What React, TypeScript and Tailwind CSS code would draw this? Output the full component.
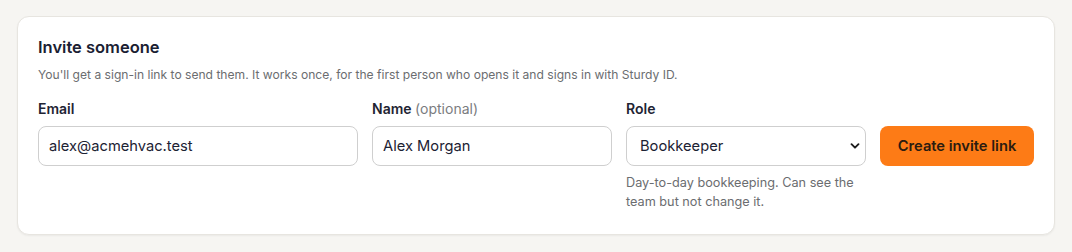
import React, { useState } from 'react'

const roles: Record<string, string> = {
  Bookkeeper: 'Day-to-day bookkeeping. Can see the team but not change it.',
  Admin: 'Full access. Can manage the team and billing.',
  Member: 'Can work in the books but not manage the team.',
}

export default function App() {
  const [email, setEmail] = useState('alex@acmehvac.test')
  const [name, setName] = useState('Alex Morgan')
  const [role, setRole] = useState('Bookkeeper')

  return (
    <div
      className="min-h-[252px] bg-[#f6f5f2] px-[17px] pt-4 pb-4 text-[#1c2233]"
      style={{ fontFamily: 'Inter, "Noto Sans", sans-serif' }}
    >
      <div className="rounded-xl border border-[#e7e5e0] bg-white px-5 pt-[19px] pb-[23px] shadow-[0_1px_2px_rgba(0,0,0,0.05)]">
        <h2 className="text-[16.5px] leading-[22px] font-semibold text-[#1a2032]">Invite someone</h2>
        <p className="mt-[8px] text-[12.1px] leading-[18px] text-[#6b6d70]">
          You'll get a sign-in link to send them. It works once, for the first person who opens it and signs in with Sturdy ID.
        </p>

        <div className="mt-[15px] grid grid-cols-[minmax(0,4fr)_minmax(0,3fr)_minmax(0,3fr)_auto] items-start gap-x-3.5">
          <label className="flex flex-col">
            <span className="mb-[7px] text-sm leading-5 font-semibold text-[#1f2433]">Email</span>
            <input
              value={email}
              onChange={(e) => setEmail(e.target.value)}
              className="h-10 w-full rounded-lg border border-[#cfcfcf] px-[10px] text-[14.7px] text-[#1c2233] outline-none"
            />
          </label>

          <label className="flex flex-col">
            <span className="mb-[7px] text-sm leading-5 font-semibold text-[#1f2433]">
              Name <span className="font-normal text-[#7a7c80]">(optional)</span>
            </span>
            <input
              value={name}
              onChange={(e) => setName(e.target.value)}
              className="h-10 w-full rounded-lg border border-[#cfcfcf] px-[10px] text-[14.7px] text-[#1c2233] outline-none"
            />
          </label>

          <label className="flex flex-col">
            <span className="mb-[7px] text-sm leading-5 font-semibold text-[#1f2433]">Role</span>
            <div className="relative">
              <select
                value={role}
                onChange={(e) => setRole(e.target.value)}
                className="h-10 w-full appearance-none rounded-lg border border-[#cfcfcf] bg-white pr-8 pl-[13px] text-[14.7px] text-[#1c2233] outline-none"
              >
                {Object.keys(roles).map((r) => (
                  <option key={r}>{r}</option>
                ))}
              </select>
              <svg
                className="pointer-events-none absolute top-1/2 right-[6px] -translate-y-1/2"
                width="10"
                height="10"
                viewBox="0 0 10 10"
                fill="none"
              >
                <path d="M1.5 3.2 5 6.7 8.5 3.2" stroke="#1c1c1c" strokeWidth="1.9" strokeLinecap="round" strokeLinejoin="round" />
              </svg>
            </div>
            <span className="mt-[7px] text-[12.7px] leading-[19px] text-[#6b6d70]">{roles[role]}</span>
          </label>

          <button className="mt-[27px] h-10 w-[154px] rounded-lg bg-[#fd7b16] text-[14.7px] font-semibold text-[#2b1c10]">
            Create invite link
          </button>
        </div>
      </div>
    </div>
  )
}
